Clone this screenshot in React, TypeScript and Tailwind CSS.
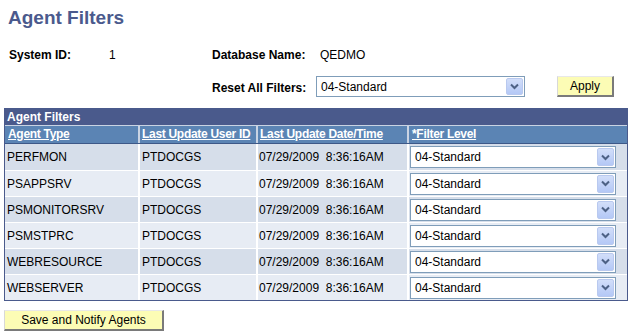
import React from "react";

const rows = ["PERFMON", "PSAPPSRV", "PSMONITORSRV", "PSMSTPRC", "WEBRESOURCE", "WEBSERVER"];

function Select({ w, h }: { w: string; h: string }) {
  return (
    <div className={`${w} ${h} flex items-center border border-[#7f9db9] bg-white`}>
      <span className="flex-1 pl-[4px] text-[12px] text-black">04-Standard</span>
      <span className="mr-[1px] flex h-[calc(100%-2px)] w-[17px] items-center justify-center rounded-[2px] border border-[#b9c9ef] bg-gradient-to-b from-[#d2def9] to-[#b4c8f6]">
        <svg width="9" height="7" viewBox="0 0 9 7">
          <path d="M1 1.5 L4.5 5 L8 1.5" fill="none" stroke="#4d6185" strokeWidth="2" />
        </svg>
      </span>
    </div>
  );
}

function Btn({ children, w }: { children: React.ReactNode; w: string }) {
  return (
    <button
      className={`${w} h-[21px] border-t border-l border-t-[#e8e8e8] border-l-[#d8d8d8] border-r-2 border-b-2 border-r-[#7a7a7a] border-b-[#7a7a7a] bg-[#fcfcb5] text-[12px] text-black leading-none`}
    >
      {children}
    </button>
  );
}

export default function App() {
  return (
    <div className="h-[336px] w-[638px] bg-white font-['Liberation_Sans',Arial,sans-serif] text-[12px] text-black">
      <div className="pl-[8px] pt-[6px] text-[19px] font-bold leading-[24px] text-[#4b5a8d]">Agent Filters</div>
      <div className="mt-[18px] flex h-[14px] items-center">
        <span className="ml-[9px] w-[100px] font-bold">System ID:</span>
        <span className="w-[103px]">1</span>
        <span className="w-[108px] font-bold">Database Name:</span>
        <span>QEDMO</span>
      </div>
      <div className="mt-[14px] flex h-[21px] items-center">
        <span className="ml-[212px] mt-[3px] w-[104px] font-bold">Reset All Filters:</span>
        <Select w="w-[209px]" h="h-[21px]" />
        <span className="ml-[32px]">
          <Btn w="w-[57px]">Apply</Btn>
        </span>
      </div>
      <div className="ml-[4px] mt-[11px] w-[624px] border border-[#4a5a8c]">
        <div className="h-[16px] bg-[#4a5a8c] pl-[2px] text-[12px] font-bold leading-[16px] text-white">Agent Filters</div>
        <div className="grid h-[19px] grid-cols-[133px_118px_151px_1fr] whitespace-nowrap border-t border-t-[#c9d3e3] border-b border-b-[#3d5888] bg-[#5b84b4] font-bold tracking-[-0.3px] text-white">
          <div className="overflow-hidden pl-[3px] leading-[17px] underline">Agent Type</div>
          <div className="overflow-hidden border-l-2 border-l-[#c9d3e3] pl-[2px] leading-[17px] underline">Last Update User ID</div>
          <div className="overflow-hidden border-l-2 border-l-[#c9d3e3] pl-[2px] leading-[17px] underline">Last Update Date/Time</div>
          <div className="overflow-hidden border-l-2 border-l-[#c9d3e3] pl-[3px] leading-[17px] underline">*Filter Level</div>
        </div>
        {rows.map((r, i) => (
          <div
            key={r}
            className={`grid h-[26px] grid-cols-[133px_118px_151px_1fr] ${i > 0 ? "border-t border-t-white" : ""} ${i % 2 === 0 ? "bg-[#d6deea]" : "bg-[#e7ecf4]"}`}
          >
            <div className="flex items-center pl-[2px]">{r}</div>
            <div className="flex items-center border-l-2 border-l-white pl-[2px]">PTDOCGS</div>
            <div className="flex items-center whitespace-pre border-l-2 border-l-white pl-[1px]">07/29/2009  8:36:16AM</div>
            <div className="flex items-center border-l-2 border-l-white pl-[1px]">
              <Select w="w-[206px]" h="h-[22px]" />
            </div>
          </div>
        ))}
      </div>
      <div className="ml-[4px] mt-[9px]">
        <Btn w="w-[160px]">Save and Notify Agents</Btn>
      </div>
    </div>
  );
}
